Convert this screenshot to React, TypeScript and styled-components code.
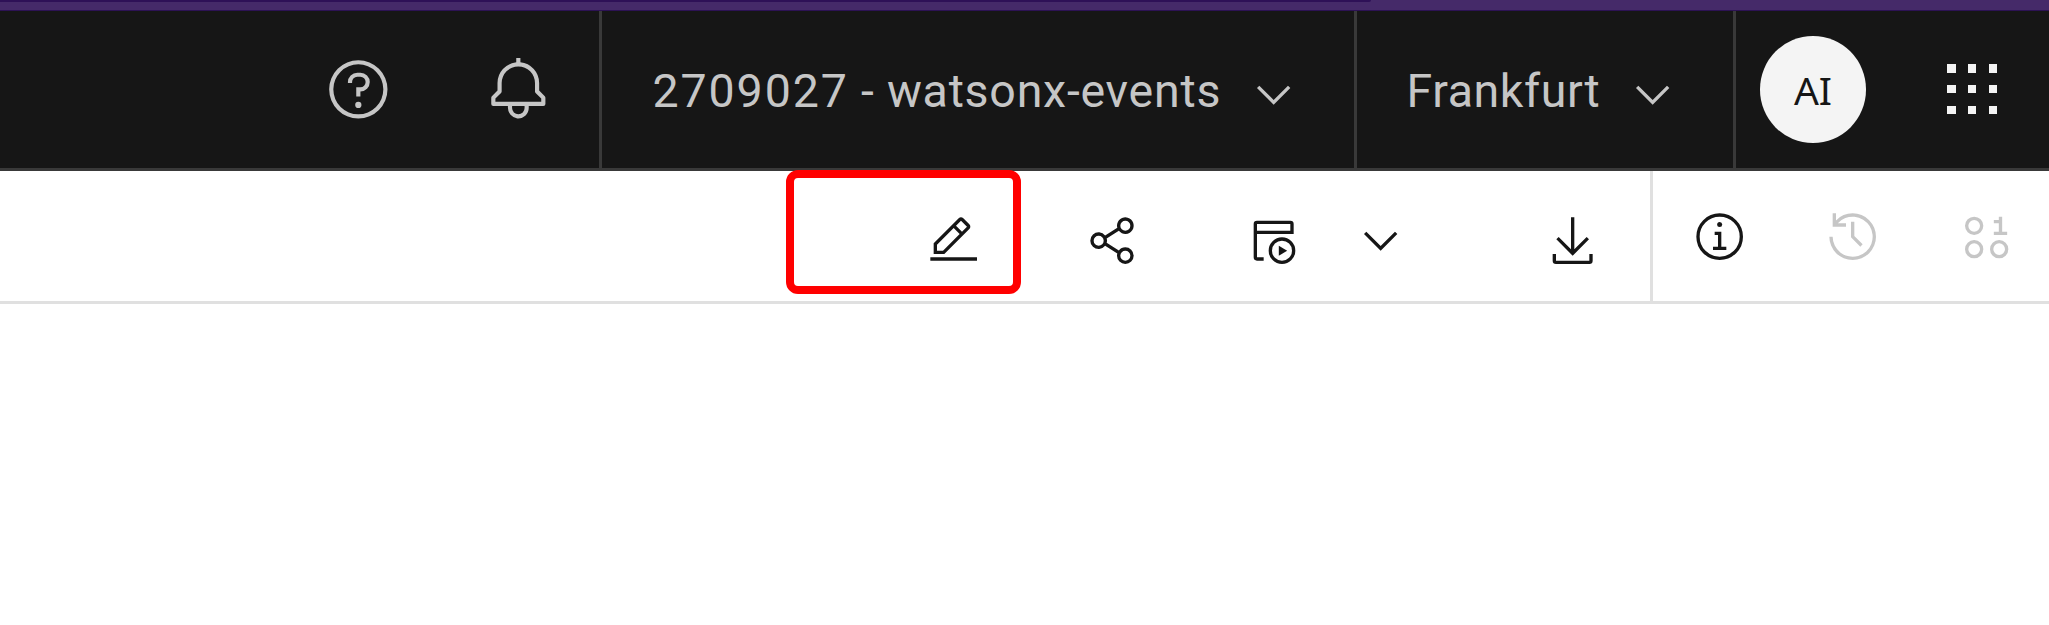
import React from "react";
import styled, { createGlobalStyle } from "styled-components";

const GlobalStyle = createGlobalStyle`
  *, *::before, *::after { box-sizing: border-box; }
  body { margin: 0; background: #fff; overflow: hidden; }
`;

const Page = styled.div`
  display: flex;
  flex-direction: column;
  height: 625px;
  background: #fff;
`;

const BrowserStrip = styled.div`
  height: 11px;
  flex: none;
  background: #452a69;
  border-bottom: 1px solid #2c1254;
`;

const StripProgress = styled.div`
  width: 1371px;
  height: 2px;
  background: #2e1157;
  border-bottom-right-radius: 2px;
`;

const Header = styled.header`
  display: flex;
  flex: none;
  height: 160px;
  background: #161616;
  border-bottom: 3px solid #393939;
  color: #c6c6c6;
  font-family: Roboto, "Liberation Sans", sans-serif;
  font-size: 46.5px;
`;

const HelpActions = styled.div`
  display: flex;
  gap: 93.3px;
  width: 599px;
  padding: 45px 47.3px 0 0;
  justify-content: flex-end;
`;

const Switch = styled.div<{ $width: number; $indent: number }>`
  display: flex;
  justify-content: space-between;
  width: ${(p) => p.$width}px;
  padding: 0 53.5px 0 ${(p) => p.$indent}px;
  border-left: 3px solid #393939;
  white-space: nowrap;
`;

const SwitchLabel = styled.span<{ $tracking: number }>`
  height: 157px;
  line-height: 161px;
  letter-spacing: ${(p) => p.$tracking}px;
`;

const Digits = styled.span`
  letter-spacing: 1.9px;
`;

const ChevronSlot = styled.span`
  display: flex;
  padding-top: 56.7px;
`;

const UserArea = styled.div`
  display: flex;
  flex: 1;
  padding: 25px 0 0 24px;
  border-left: 3px solid #393939;
`;

const Avatar = styled.div`
  display: flex;
  align-items: center;
  justify-content: center;
  width: 106px;
  height: 106.6px;
  border-radius: 50%;
  background: #f4f4f4;
  color: #161616;
  font-family: "Noto Sans", sans-serif;
  font-size: 39px;
  line-height: 1;
`;

const SwitcherSlot = styled.div`
  padding: 20px 0 0 72.6px;
  color: #f4f4f4;
`;

const Toolbar = styled.div`
  display: flex;
  flex: none;
  height: 133px;
  border-bottom: 3px solid #e0e0e0;
  color: #161616;
`;

const Actions = styled.div`
  display: flex;
  width: 1650px;
  padding-left: 786px;
`;

const Highlight = styled.div`
  display: flex;
  flex: none;
  width: 235px;
  height: 124px;
  margin-top: -1px;
  padding: 35.7px 0 0 132.7px;
  border: 8px solid #f00;
  border-radius: 12px;
`;

const Tool = styled.div<{ $gap: number }>`
  display: flex;
  flex: none;
  margin-left: ${(p) => p.$gap}px;
  padding-top: 42.7px;
`;

const Panels = styled.div`
  display: flex;
  flex: 1;
  gap: 80.4px;
  padding: 38.7px 0 0 39.7px;
  border-left: 3px solid #e0e0e0;
`;

const Glyph = styled.svg<{ $size?: number; $muted?: boolean }>`
  display: block;
  flex: none;
  width: ${(p) => p.$size ?? 53.33}px;
  height: ${(p) => p.$size ?? 53.33}px;
  fill: currentColor;
  color: ${(p) => (p.$muted ? "#c6c6c6" : "inherit")};
`;

const Chevron = () => (
  <Glyph viewBox="0 0 16 16">
    <path d="M8 11 3 6 3.7 5.3 8 9.6 12.3 5.3 13 6z" />
  </Glyph>
);

export default function App() {
  return (
    <>
      <GlobalStyle />
      <Page>
        <BrowserStrip>
          <StripProgress />
        </BrowserStrip>
        <Header>
          <HelpActions>
            <Glyph viewBox="0 0 32 32" $size={66.67}>
              <path d="M16 2a14 14 0 1 0 14 14A14 14 0 0 0 16 2zm0 26a12 12 0 1 1 12-12 12 12 0 0 1-12 12z" />
              <circle cx="16" cy="23.5" r="1.5" />
              <path d="M17 8h-1.5A4.49 4.49 0 0 0 11 12.5V13h2v-.5A2.5 2.5 0 0 1 15.5 10H17a2.5 2.5 0 0 1 0 5h-2v4.5h2V17a4.5 4.5 0 0 0 0-9z" />
            </Glyph>
            <Glyph viewBox="0 0 32 32" $size={66.67}>
              <path d="M28.7071 19.293 26 16.5859V13a10.0136 10.0136 0 0 0-9-9.9492V1H15V3.0508A10.0136 10.0136 0 0 0 6 13v3.5859L3.2929 19.293A1 1 0 0 0 3 20v3a1 1 0 0 0 1 1h7v.7768a5.152 5.152 0 0 0 4.5 5.1987A5.0057 5.0057 0 0 0 21 25V24h7a1 1 0 0 0 1-1V20A1 1 0 0 0 28.7071 19.293ZM19 25a3 3 0 0 1-6 0V24h6Zm8-3H5V20.4141L7.707 17.707A1 1 0 0 0 8 17V13a8 8 0 0 1 16 0v4a1 1 0 0 0 .293.707L27 20.4141Z" />
            </Glyph>
          </HelpActions>
          <Switch $width={755} $indent={50.5}>
            <SwitchLabel $tracking={0.75}>
              <Digits>2709027</Digits> - watsonx-events
            </SwitchLabel>
            <ChevronSlot>
              <Chevron />
            </ChevronSlot>
          </Switch>
          <Switch $width={379} $indent={49.5}>
            <SwitchLabel $tracking={0.6}>Frankfurt</SwitchLabel>
            <ChevronSlot>
              <Chevron />
            </ChevronSlot>
          </Switch>
          <UserArea>
            <Avatar>AI</Avatar>
            <SwitcherSlot>
              <Glyph viewBox="0 0 32 32" $size={66.67} shapeRendering="crispEdges">
                {[4, 14, 24].map((y) =>
                  [4, 14, 24].map((x) => <rect key={`${x}-${y}`} x={x} y={y} width="4" height="4" />)
                )}
              </Glyph>
            </SwitcherSlot>
          </UserArea>
        </Header>
        <Toolbar>
          <Actions>
            <Highlight>
              <Glyph viewBox="0 0 32 32">
                <path d="M2 26H30V28H2zM25.4 9c.8-.8.8-2 0-2.8l-3.6-3.6c-.8-.8-2-.8-2.8 0l-15 15V24h6.4L25.4 9zM20.4 4 24 7.6l-3 3L17.4 7 20.4 4zM6 22v-3.6l10-10 3.6 3.6-10 10H6z" />
              </Glyph>
            </Highlight>
            <Tool $gap={65.7}>
              <Glyph viewBox="0 0 32 32">
                <path d="M23 20a5 5 0 0 0-3.89 1.89L11.8 17.32a4.46 4.46 0 0 0 0-2.64l7.31-4.57A5 5 0 1 0 18 7a4.79 4.79 0 0 0 .2 1.32l-7.31 4.57a5 5 0 1 0 0 6.22l7.31 4.57A4.79 4.79 0 0 0 18 25a5 5 0 1 0 5-5ZM23 4a3 3 0 1 1-3 3A3 3 0 0 1 23 4ZM7 19a3 3 0 1 1 3-3A3 3 0 0 1 7 19Zm16 9a3 3 0 1 1 3-3A3 3 0 0 1 23 28Z" />
              </Glyph>
            </Tool>
            <Tool $gap={106.7}>
              <Glyph viewBox="0 0 32 32">
                <path d="M26 4H6a2 2 0 0 0-2 2v20a2 2 0 0 0 2 2h4v-2H6V12h22V6a2 2 0 0 0-2-2ZM26 10H6V6h20Z" />
                <circle cx="21" cy="22" r="7" fill="none" stroke="currentColor" strokeWidth="2" />
                <path d="M19.1 19v6l5-3z" />
              </Glyph>
            </Tool>
            <Tool $gap={54}>
              <Chevron />
            </Tool>
            <Tool $gap={138.3}>
              <Glyph viewBox="0 0 32 32">
                <path d="M26 24v4H6V24H4v4a2 2 0 0 0 2 2H26a2 2 0 0 0 2-2V24Z" />
                <path d="M25.8 15.2 24.4 13.8 17 21.2V2H15V21.2L7.6 13.8 6.2 15.2 16 25Z" />
              </Glyph>
            </Tool>
          </Actions>
          <Panels>
            <Glyph viewBox="0 0 32 32">
              <circle cx="16" cy="16" r="13" fill="none" stroke="currentColor" strokeWidth="2" />
              <circle cx="16" cy="8.7" r="1.5" />
              <path d="M17 22V13H13V15H15V22H12V24H20V22Z" />
            </Glyph>
            <Glyph viewBox="0 0 32 32" $muted>
              <path d="M20.59 22 15 16.41V7H17V15.58L22 20.59Z" />
              <path d="M16 2A13.94 13.94 0 0 0 6 6.23V2H4v8h8V8H7.08A12 12 0 1 1 4 16H2A14 14 0 1 0 16 2Z" />
            </Glyph>
            <Glyph viewBox="0 0 32 32" $muted>
              <g fill="none" stroke="currentColor" strokeWidth="2">
                <circle cx="8.5" cy="9.5" r="4.5" />
                <circle cx="8.5" cy="23.5" r="4.5" />
                <circle cx="23.5" cy="23.5" r="4.5" />
              </g>
              <path d="M25.3 13V4H23.3V6H20.3V8H23.3V13H20.3V15H28.3V13Z" />
            </Glyph>
          </Panels>
        </Toolbar>
      </Page>
    </>
  );
}
